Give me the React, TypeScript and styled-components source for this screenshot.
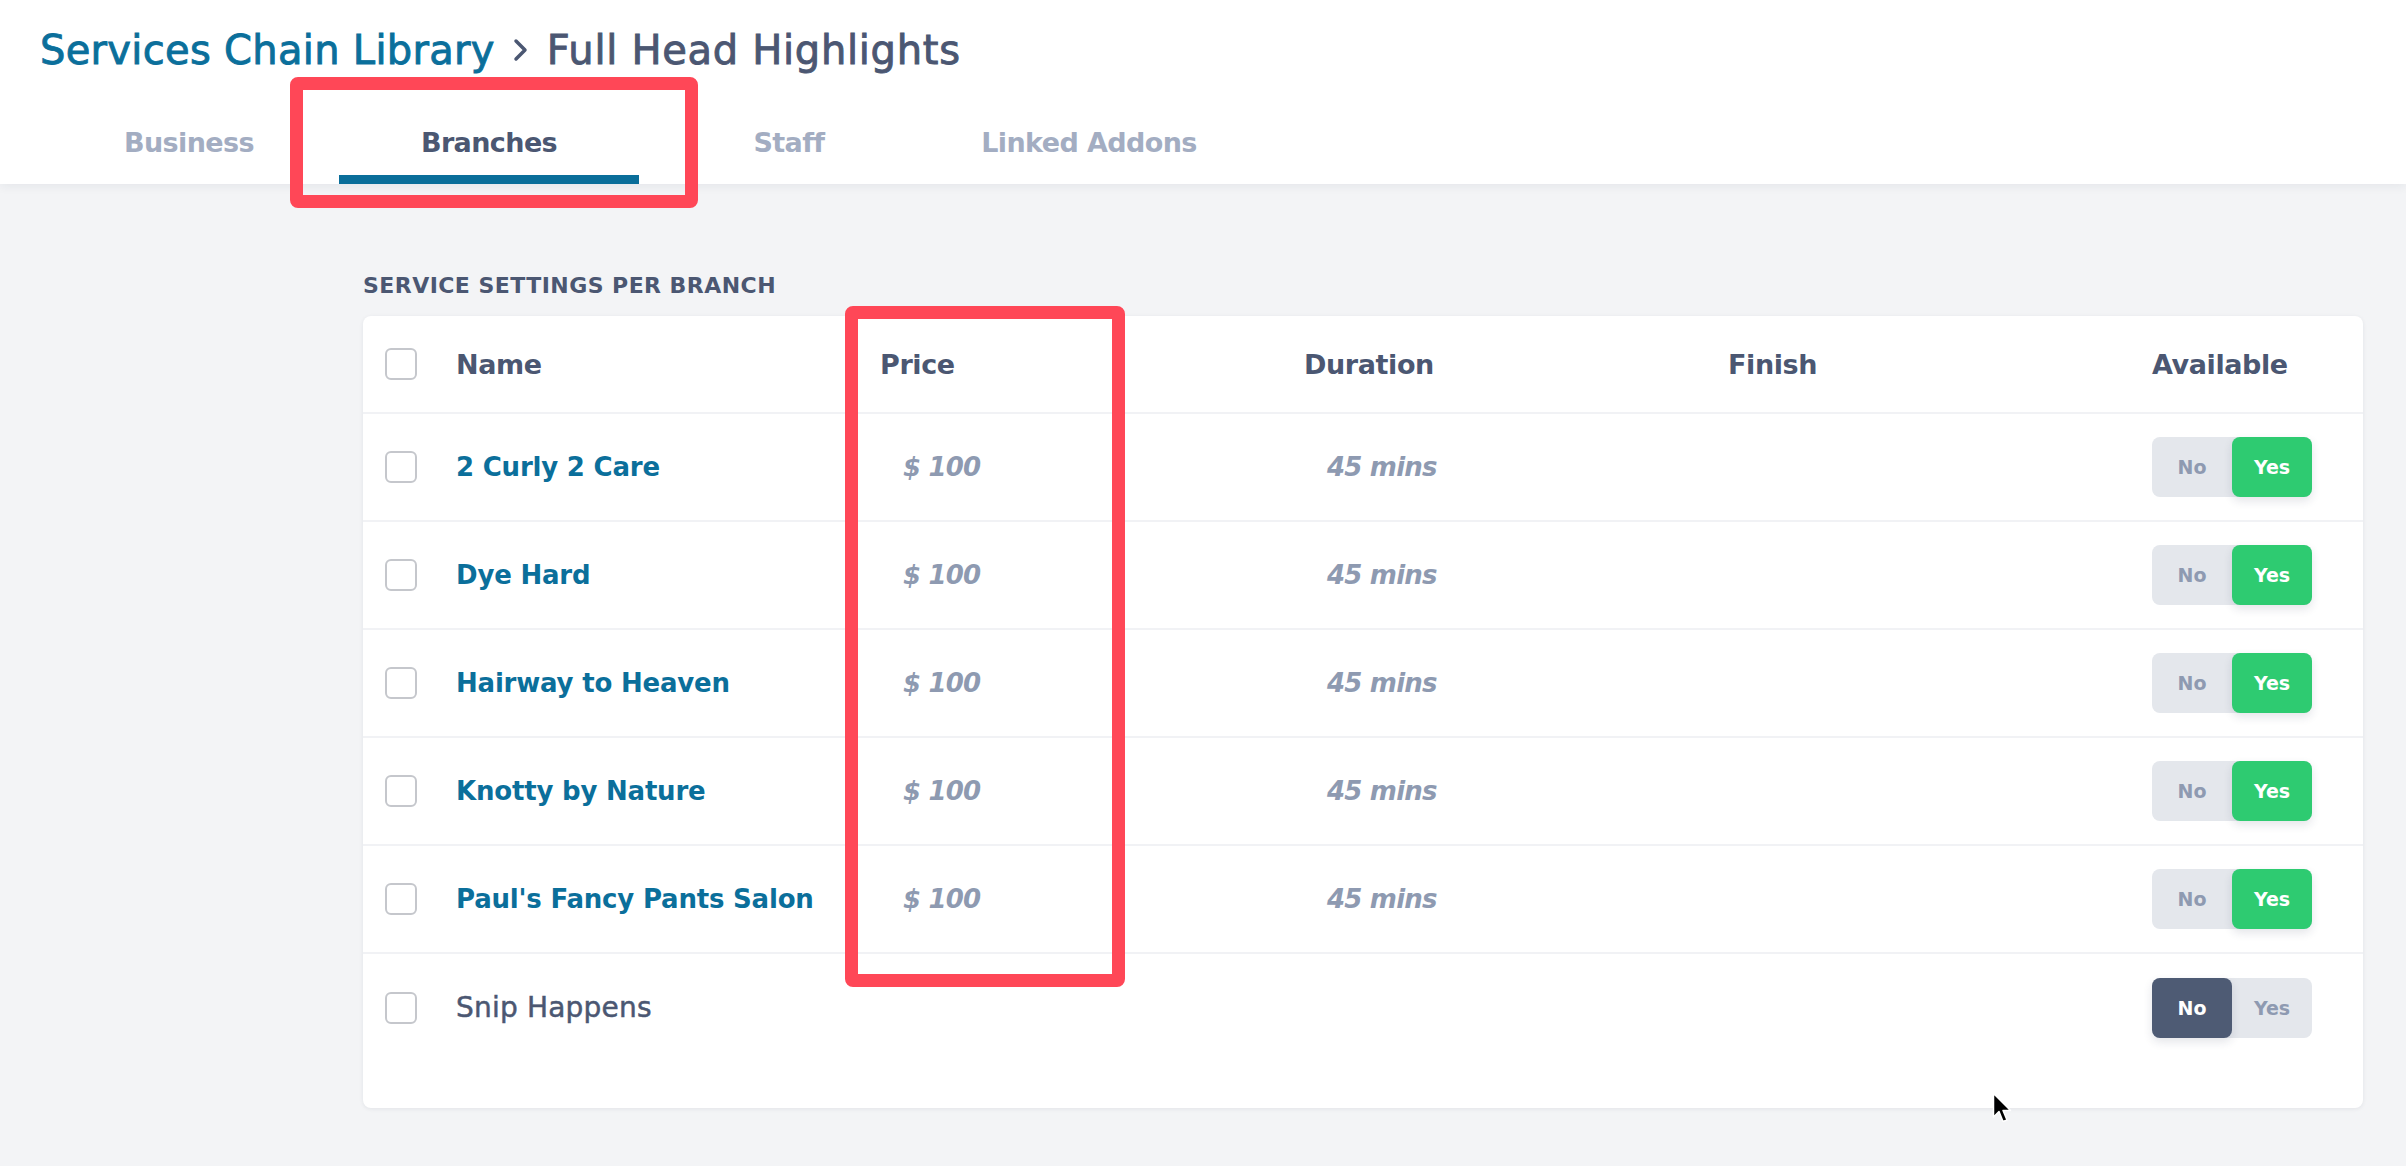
import styled, { createGlobalStyle } from "styled-components";

type Branch = {
  name: string;
  price?: string;
  duration?: string;
  available: boolean;
};

const branches: Branch[] = [
  { name: "2 Curly 2 Care", price: "$ 100", duration: "45 mins", available: true },
  { name: "Dye Hard", price: "$ 100", duration: "45 mins", available: true },
  { name: "Hairway to Heaven", price: "$ 100", duration: "45 mins", available: true },
  { name: "Knotty by Nature", price: "$ 100", duration: "45 mins", available: true },
  { name: "Paul's Fancy Pants Salon", price: "$ 100", duration: "45 mins", available: true },
  { name: "Snip Happens", available: false },
];

const tabs = ["Business", "Branches", "Staff", "Linked Addons"];

const GlobalStyle = createGlobalStyle`
  html, body {
    margin: 0;
    padding: 0;
    background: #f3f4f6;
    font-family: "DejaVu Sans", "Liberation Sans", sans-serif;
  }
  * {
    box-sizing: border-box;
  }
`;

const App = (): JSX.Element => {
  return (
    <Page>
      <GlobalStyle />
      <Header>
        <Title>
          <Crumb>Services Chain Library</Crumb>
          <Chevron viewBox="0 0 16 24">
            <polyline points="3,3 12,12 3,21" />
          </Chevron>
          <Current>Full Head Highlights</Current>
        </Title>
        <Tabs>
          {tabs.map((tab) => (
            <Tab key={tab} $active={tab === "Branches"}>
              {tab}
            </Tab>
          ))}
        </Tabs>
      </Header>
      <Content>
        <SectionLabel>SERVICE SETTINGS PER BRANCH</SectionLabel>
        <Card>
          <Row $head>
            <CheckBox />
            <HeadCell>Name</HeadCell>
            <HeadCell>Price</HeadCell>
            <HeadCell>Duration</HeadCell>
            <HeadCell>Finish</HeadCell>
            <HeadCell>Available</HeadCell>
          </Row>
          {branches.map((b) => (
            <Row key={b.name}>
              <CheckBox />
              <NameCell $linked={b.available}>{b.name}</NameCell>
              <ValueCell>{b.price}</ValueCell>
              <ValueCell>{b.duration}</ValueCell>
              <ValueCell />
              <Toggle>
                <ToggleOption $on={!b.available} $tone="dark">
                  No
                </ToggleOption>
                <ToggleOption $on={b.available} $tone="green">
                  Yes
                </ToggleOption>
              </Toggle>
            </Row>
          ))}
        </Card>
      </Content>

      <Highlight $x={290} $y={77} $w={408} $h={131} />
      <Highlight $x={845} $y={306} $w={280} $h={681} />

      <Pointer viewBox="0 0 20 32">
        <path d="M1.5 1.5 L1.5 25 L7 19.5 L11 29.5 L15 28 L11 18.5 L18.5 18.5 Z" />
      </Pointer>
    </Page>
  );
};

export default App;

const Page = styled.div`
  position: relative;
  width: 2406px;
  min-height: 1166px;
  background: #f3f4f6;
  overflow: hidden;
`;

const Header = styled.header`
  background: #ffffff;
  padding-top: 30px;
  box-shadow: 0 2px 10px rgba(30, 40, 70, 0.07);
  position: relative;
`;

const Title = styled.h1`
  display: flex;
  align-items: center;
  gap: 18px;
  margin: 0;
  padding-left: 40px;
  height: 40px;
  font-size: 40px;
  line-height: 40px;
  font-weight: 400;
  letter-spacing: 0.3px;
  -webkit-text-stroke: 0.9px currentColor;
`;

const Crumb = styled.span`
  color: #0b6f9b;
`;

const Current = styled.span`
  color: #4b5772;
  letter-spacing: 0.7px;
`;

const Chevron = styled.svg`
  width: 16px;
  height: 24px;
  fill: none;
  stroke: #4b5772;
  stroke-width: 3.5;
  stroke-linecap: round;
  stroke-linejoin: round;
`;

const Tabs = styled.nav`
  display: flex;
  padding-left: 39px;
  height: 114px;
`;

const Tab = styled.div<{ $active?: boolean }>`
  width: 300px;
  display: flex;
  align-items: flex-end;
  justify-content: center;
  padding-bottom: 18px;
  border-bottom: 9px solid ${(p) => (p.$active ? "#0a6e9a" : "transparent")};
  color: ${(p) => (p.$active ? "#4b5772" : "#a3adc2")};
  font-size: 27px;
  line-height: 28px;
  font-weight: 700;
  letter-spacing: -0.6px;
`;

const Content = styled.main`
  padding: 91px 43px 60px 363px;
`;

const SectionLabel = styled.div`
  color: #4b5772;
  font-size: 22px;
  line-height: 22px;
  font-weight: 700;
  letter-spacing: 0.45px;
  margin-bottom: 19px;
`;

const Card = styled.section`
  background: #ffffff;
  border-radius: 8px;
  box-shadow: 0 1px 4px rgba(30, 40, 70, 0.08);
  padding-bottom: 46px;
`;

const Row = styled.div<{ $head?: boolean }>`
  display: grid;
  grid-template-columns: 71px repeat(4, 424px) 1fr;
  align-items: center;
  height: ${(p) => (p.$head ? 98 : 108)}px;
  padding: 0 22px;
  border-bottom: 2px solid #f1f2f5;

  &:last-child {
    border-bottom: none;
  }
`;

const CheckBox = styled.span`
  display: block;
  width: 32px;
  height: 32px;
  border: 2px solid #c5c7cc;
  border-radius: 6px;
  background: #ffffff;
`;

const HeadCell = styled.div`
  color: #4b5772;
  font-size: 27px;
  line-height: 27px;
  font-weight: 700;
  letter-spacing: -0.4px;
`;

const NameCell = styled.div<{ $linked?: boolean }>`
  color: ${(p) => (p.$linked ? "#0b6f9b" : "#4b5772")};
  font-size: ${(p) => (p.$linked ? 26 : 28)}px;
  line-height: 28px;
  font-weight: ${(p) => (p.$linked ? 700 : 400)};
  letter-spacing: ${(p) => (p.$linked ? "-0.2px" : "0.2px")};
  -webkit-text-stroke: ${(p) => (p.$linked ? "0" : "0.5px currentColor")};
`;

const ValueCell = styled.div`
  padding-left: 23px;
  color: #8e9ab1;
  font-size: 26px;
  line-height: 28px;
  font-style: italic;
  font-weight: 700;
  letter-spacing: -0.8px;
`;

const Toggle = styled.div`
  display: flex;
  width: 160px;
  height: 60px;
  border-radius: 8px;
  background: #e4e7ec;
`;

const ToggleOption = styled.div<{ $on?: boolean; $tone: "dark" | "green" }>`
  flex: 1;
  display: flex;
  align-items: center;
  justify-content: center;
  border-radius: 8px;
  font-size: 19px;
  font-weight: 700;
  color: ${(p) => (p.$on ? "#ffffff" : "#8e9ab1")};
  background: ${(p) =>
    p.$on ? (p.$tone === "green" ? "#2ecb71" : "#4e5b74") : "transparent"};
  box-shadow: ${(p) => (p.$on ? "0 4px 10px rgba(30, 40, 70, 0.12)" : "none")};
`;

const Highlight = styled.div<{ $x: number; $y: number; $w: number; $h: number }>`
  position: absolute;
  left: ${(p) => p.$x}px;
  top: ${(p) => p.$y}px;
  width: ${(p) => p.$w}px;
  height: ${(p) => p.$h}px;
  border: 13px solid #ff4757;
  border-radius: 8px;
  pointer-events: none;
`;

const Pointer = styled.svg`
  position: absolute;
  left: 1992px;
  top: 1092px;
  width: 20px;
  height: 32px;
  fill: #000000;
  stroke: #ffffff;
  stroke-width: 1.5;
  stroke-linejoin: round;
`;
